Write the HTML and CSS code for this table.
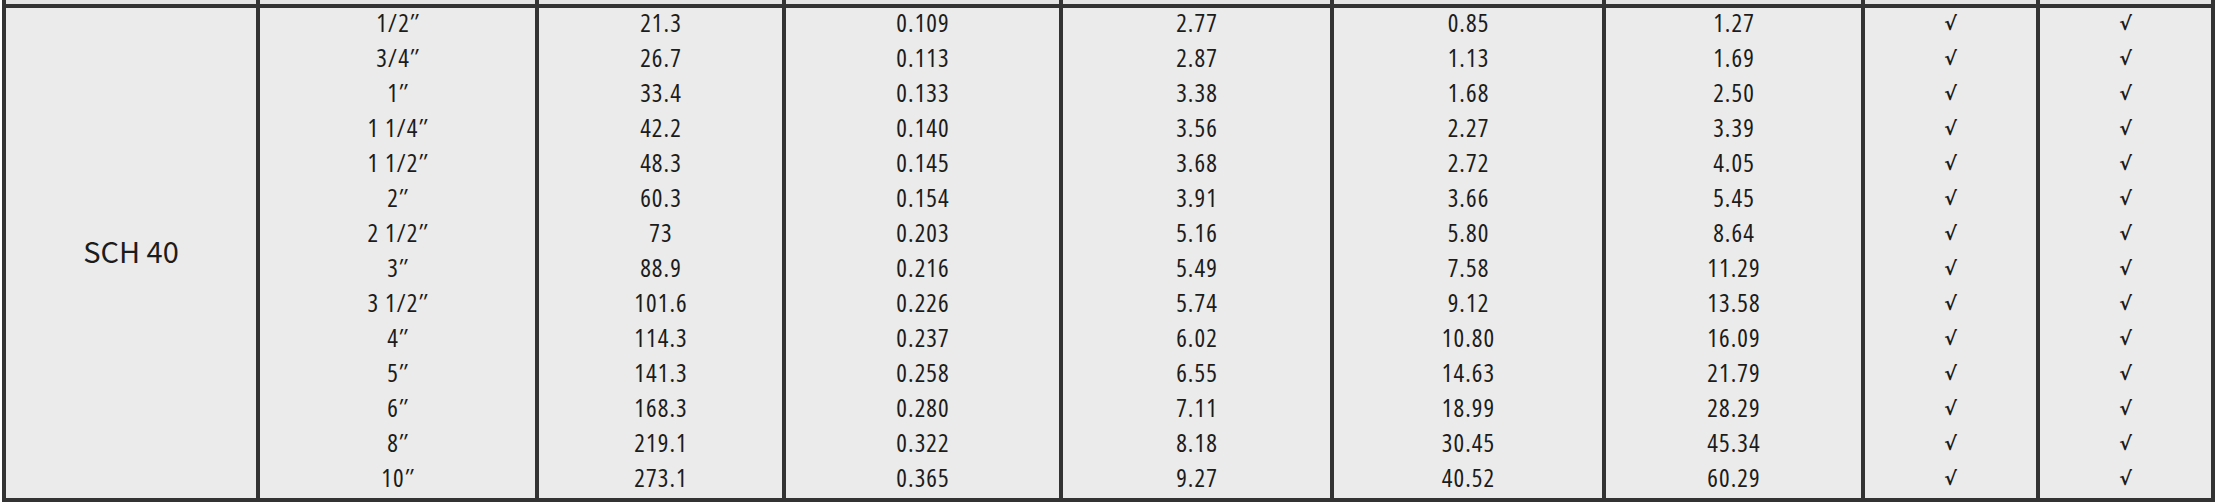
FILE: index.html
```html
<!DOCTYPE html>
<html lang="en">
<head>
<meta charset="utf-8">
<title>SCH 40 pipe table</title>
<link rel="stylesheet" href="styles.css">
</head>
<body>
<div class="sheet">
  <div class="strip"></div><div class="strip"></div><div class="strip"></div><div class="strip"></div><div class="strip"></div><div class="strip"></div><div class="strip"></div><div class="strip"></div><div class="strip last"></div>
  <div class="grid">
    <div class="label">SCH 40</div>
    <div class="c">1/2″</div><div class="c">21.3</div><div class="c">0.109</div><div class="c">2.77</div><div class="c">0.85</div><div class="c">1.27</div><div class="c ck">√</div><div class="c ck last">√</div>
    <div class="c">3/4″</div><div class="c">26.7</div><div class="c">0.113</div><div class="c">2.87</div><div class="c">1.13</div><div class="c">1.69</div><div class="c ck">√</div><div class="c ck last">√</div>
    <div class="c">1″</div><div class="c">33.4</div><div class="c">0.133</div><div class="c">3.38</div><div class="c">1.68</div><div class="c">2.50</div><div class="c ck">√</div><div class="c ck last">√</div>
    <div class="c">1 1/4″</div><div class="c">42.2</div><div class="c">0.140</div><div class="c">3.56</div><div class="c">2.27</div><div class="c">3.39</div><div class="c ck">√</div><div class="c ck last">√</div>
    <div class="c">1 1/2″</div><div class="c">48.3</div><div class="c">0.145</div><div class="c">3.68</div><div class="c">2.72</div><div class="c">4.05</div><div class="c ck">√</div><div class="c ck last">√</div>
    <div class="c">2″</div><div class="c">60.3</div><div class="c">0.154</div><div class="c">3.91</div><div class="c">3.66</div><div class="c">5.45</div><div class="c ck">√</div><div class="c ck last">√</div>
    <div class="c">2 1/2″</div><div class="c">73</div><div class="c">0.203</div><div class="c">5.16</div><div class="c">5.80</div><div class="c">8.64</div><div class="c ck">√</div><div class="c ck last">√</div>
    <div class="c">3″</div><div class="c">88.9</div><div class="c">0.216</div><div class="c">5.49</div><div class="c">7.58</div><div class="c">11.29</div><div class="c ck">√</div><div class="c ck last">√</div>
    <div class="c">3 1/2″</div><div class="c">101.6</div><div class="c">0.226</div><div class="c">5.74</div><div class="c">9.12</div><div class="c">13.58</div><div class="c ck">√</div><div class="c ck last">√</div>
    <div class="c">4″</div><div class="c">114.3</div><div class="c">0.237</div><div class="c">6.02</div><div class="c">10.80</div><div class="c">16.09</div><div class="c ck">√</div><div class="c ck last">√</div>
    <div class="c">5″</div><div class="c">141.3</div><div class="c">0.258</div><div class="c">6.55</div><div class="c">14.63</div><div class="c">21.79</div><div class="c ck">√</div><div class="c ck last">√</div>
    <div class="c">6″</div><div class="c">168.3</div><div class="c">0.280</div><div class="c">7.11</div><div class="c">18.99</div><div class="c">28.29</div><div class="c ck">√</div><div class="c ck last">√</div>
    <div class="c">8″</div><div class="c">219.1</div><div class="c">0.322</div><div class="c">8.18</div><div class="c">30.45</div><div class="c">45.34</div><div class="c ck">√</div><div class="c ck last">√</div>
    <div class="c">10″</div><div class="c">273.1</div><div class="c">0.365</div><div class="c">9.27</div><div class="c">40.52</div><div class="c">60.29</div><div class="c ck">√</div><div class="c ck last">√</div>
  </div>
</div>
</body>
</html>
```

FILE: styles.css
```css
html, body {
  margin: 0;
  padding: 0;
  background: #ffffff;
}

.sheet {
  margin-left: 2px;
  width: 2213px;
  display: grid;
  grid-template-columns: 254px 279px 247px 277px 271px 272px 259px 175px 179px;
  grid-template-rows: 4px auto;
}

.strip {
  box-sizing: border-box;
  height: 4px;
  background: #e4e4e4;
  border-left: 4px solid #333333;
}

.strip.last {
  border-right: 4px solid #333333;
}

.grid {
  grid-column: 1 / -1;
  display: grid;
  grid-template-columns: subgrid;
  grid-template-rows: repeat(14, 35px);
  border-top: 4px solid #333333;
  border-bottom: 4px solid #333333;
  background: #ebebeb;
  color: #1c1c1c;
}

.label {
  grid-row: 1 / span 14;
  box-sizing: border-box;
  border-left: 4px solid #333333;
  display: flex;
  align-items: center;
  justify-content: center;
  font-family: "Noto Sans CJK KR", "Noto Sans", sans-serif;
  font-size: 29px;
  padding-bottom: 7px;
}

.c {
  box-sizing: border-box;
  border-left: 4px solid #333333;
  text-align: center;
  font-family: "Open Sans", "Liberation Sans Narrow", sans-serif;
  font-stretch: 75%;
  font-weight: 400;
  font-size: 25px;
  letter-spacing: 1.1px;
  text-indent: 1.1px;
  line-height: 29px;
  white-space: nowrap;
}

.c.last {
  border-right: 4px solid #333333;
}

.ck {
  font-family: "DejaVu Sans", sans-serif;
  font-stretch: normal;
  font-size: 19px;
  font-weight: bold;
  letter-spacing: 0;
  text-indent: 0;
  line-height: 31px;
}
```
